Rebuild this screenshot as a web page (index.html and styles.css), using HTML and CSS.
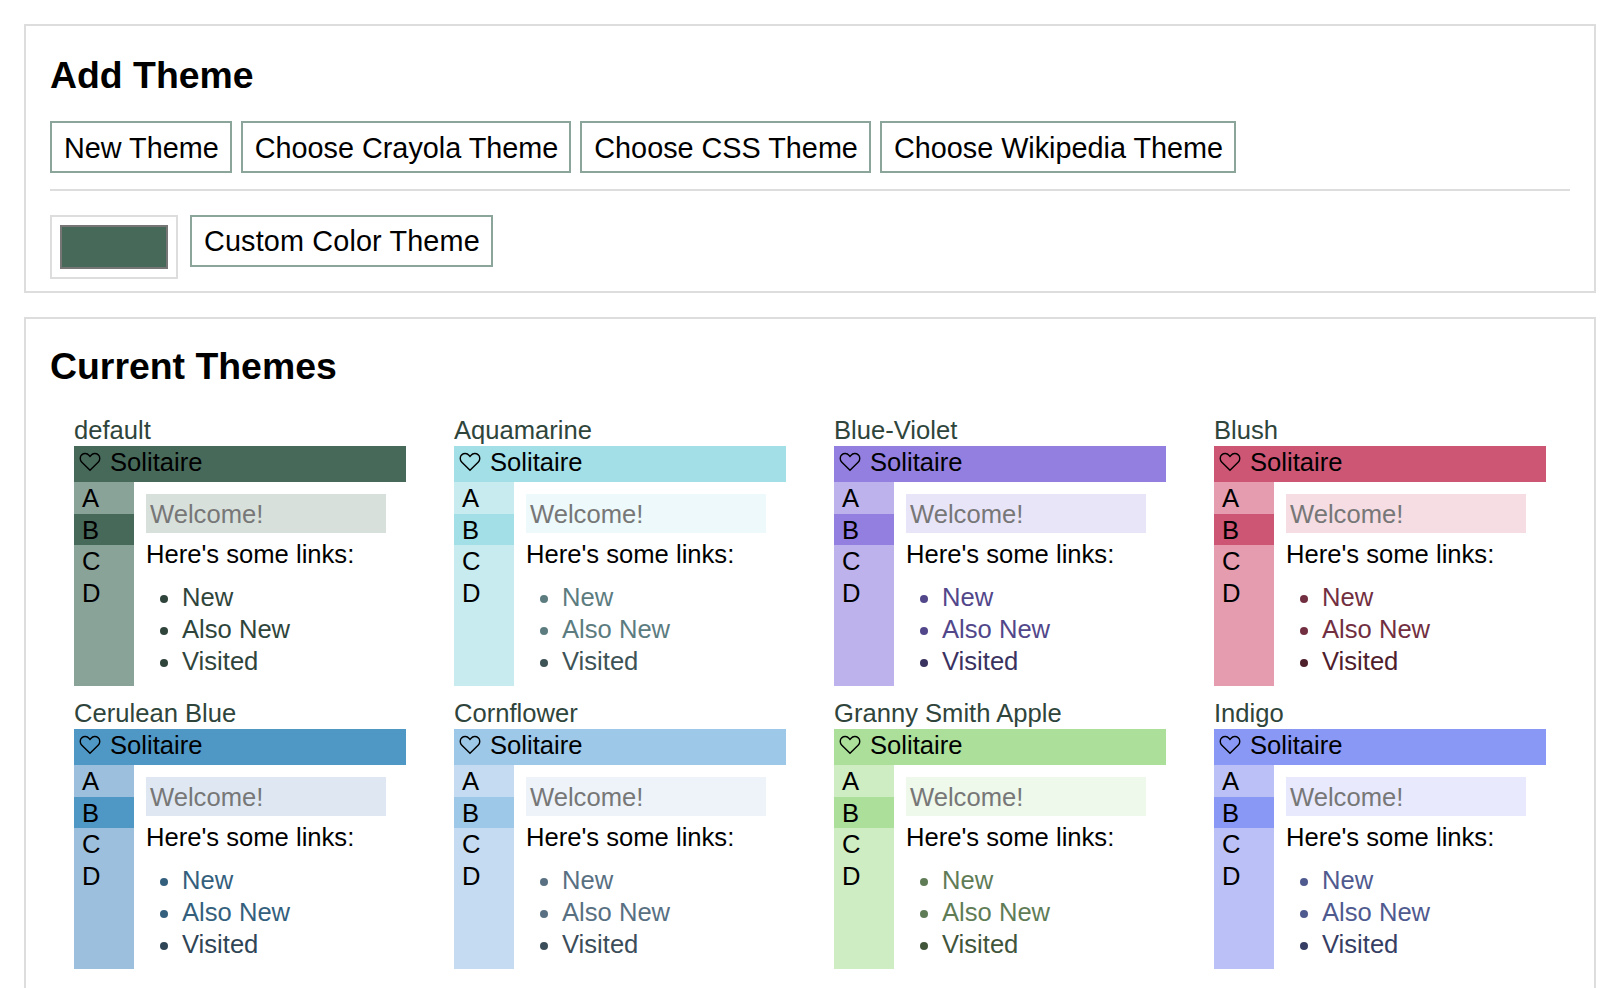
FILE: index.html
```html
<!DOCTYPE HTML><html>
<head>
  <meta name="viewport" content="width=device-width, initial-scale=1">
  <title>Themes</title>
  <link rel="stylesheet" href="styles.css">
</head>
<body>
  <section class="panel add-panel">
    <h2>Add Theme</h2>
    <div class="button-row">
      <button type="button">New Theme</button>
      <button type="button">Choose Crayola Theme</button>
      <button type="button">Choose CSS Theme</button>
      <button type="button">Choose Wikipedia Theme</button>
    </div>
    <hr />
    <div class="button-row custom-row">
      <input class="swatch" type="color" value="#47695a">
      <button type="button" class="custom-button">Custom Color Theme</button>
    </div>
  </section>

  <section class="panel themes-panel">
    <h2>Current Themes</h2>
    <div class="theme-grid">

      <div class="theme theme-default">
        <div class="theme-name">default</div>
        <div class="preview">
          <div class="preview-head"><svg class="heart" viewBox="0 0 20 18"><path d="M10 16.6 2.6 9.2C.6 7.2.7 4.2 2.5 2.5 4.4.8 7.4 1 9 2.8l1 1.1 1-1.1c1.6-1.8 4.6-2 6.5-.3 1.8 1.7 1.9 4.7-.1 6.7z"/></svg>Solitaire</div>
          <div class="preview-body">
            <ul class="side"><li>A</li><li class="active">B</li><li>C</li><li>D</li></ul>
            <div class="main">
              <div class="welcome">Welcome!</div>
              <p>Here's some links:</p>
              <ul class="links"><li>New</li><li>Also New</li><li class="visited">Visited</li></ul>
            </div>
          </div>
        </div>
      </div>

      <div class="theme theme-aquamarine">
        <div class="theme-name">Aquamarine</div>
        <div class="preview">
          <div class="preview-head"><svg class="heart" viewBox="0 0 20 18"><path d="M10 16.6 2.6 9.2C.6 7.2.7 4.2 2.5 2.5 4.4.8 7.4 1 9 2.8l1 1.1 1-1.1c1.6-1.8 4.6-2 6.5-.3 1.8 1.7 1.9 4.7-.1 6.7z"/></svg>Solitaire</div>
          <div class="preview-body">
            <ul class="side"><li>A</li><li class="active">B</li><li>C</li><li>D</li></ul>
            <div class="main">
              <div class="welcome">Welcome!</div>
              <p>Here's some links:</p>
              <ul class="links"><li>New</li><li>Also New</li><li class="visited">Visited</li></ul>
            </div>
          </div>
        </div>
      </div>

      <div class="theme theme-blueviolet">
        <div class="theme-name">Blue-Violet</div>
        <div class="preview">
          <div class="preview-head"><svg class="heart" viewBox="0 0 20 18"><path d="M10 16.6 2.6 9.2C.6 7.2.7 4.2 2.5 2.5 4.4.8 7.4 1 9 2.8l1 1.1 1-1.1c1.6-1.8 4.6-2 6.5-.3 1.8 1.7 1.9 4.7-.1 6.7z"/></svg>Solitaire</div>
          <div class="preview-body">
            <ul class="side"><li>A</li><li class="active">B</li><li>C</li><li>D</li></ul>
            <div class="main">
              <div class="welcome">Welcome!</div>
              <p>Here's some links:</p>
              <ul class="links"><li>New</li><li>Also New</li><li class="visited">Visited</li></ul>
            </div>
          </div>
        </div>
      </div>

      <div class="theme theme-blush">
        <div class="theme-name">Blush</div>
        <div class="preview">
          <div class="preview-head"><svg class="heart" viewBox="0 0 20 18"><path d="M10 16.6 2.6 9.2C.6 7.2.7 4.2 2.5 2.5 4.4.8 7.4 1 9 2.8l1 1.1 1-1.1c1.6-1.8 4.6-2 6.5-.3 1.8 1.7 1.9 4.7-.1 6.7z"/></svg>Solitaire</div>
          <div class="preview-body">
            <ul class="side"><li>A</li><li class="active">B</li><li>C</li><li>D</li></ul>
            <div class="main">
              <div class="welcome">Welcome!</div>
              <p>Here's some links:</p>
              <ul class="links"><li>New</li><li>Also New</li><li class="visited">Visited</li></ul>
            </div>
          </div>
        </div>
      </div>

      <div class="theme theme-cerulean">
        <div class="theme-name">Cerulean Blue</div>
        <div class="preview">
          <div class="preview-head"><svg class="heart" viewBox="0 0 20 18"><path d="M10 16.6 2.6 9.2C.6 7.2.7 4.2 2.5 2.5 4.4.8 7.4 1 9 2.8l1 1.1 1-1.1c1.6-1.8 4.6-2 6.5-.3 1.8 1.7 1.9 4.7-.1 6.7z"/></svg>Solitaire</div>
          <div class="preview-body">
            <ul class="side"><li>A</li><li class="active">B</li><li>C</li><li>D</li></ul>
            <div class="main">
              <div class="welcome">Welcome!</div>
              <p>Here's some links:</p>
              <ul class="links"><li>New</li><li>Also New</li><li class="visited">Visited</li></ul>
            </div>
          </div>
        </div>
      </div>

      <div class="theme theme-cornflower">
        <div class="theme-name">Cornflower</div>
        <div class="preview">
          <div class="preview-head"><svg class="heart" viewBox="0 0 20 18"><path d="M10 16.6 2.6 9.2C.6 7.2.7 4.2 2.5 2.5 4.4.8 7.4 1 9 2.8l1 1.1 1-1.1c1.6-1.8 4.6-2 6.5-.3 1.8 1.7 1.9 4.7-.1 6.7z"/></svg>Solitaire</div>
          <div class="preview-body">
            <ul class="side"><li>A</li><li class="active">B</li><li>C</li><li>D</li></ul>
            <div class="main">
              <div class="welcome">Welcome!</div>
              <p>Here's some links:</p>
              <ul class="links"><li>New</li><li>Also New</li><li class="visited">Visited</li></ul>
            </div>
          </div>
        </div>
      </div>

      <div class="theme theme-granny">
        <div class="theme-name">Granny Smith Apple</div>
        <div class="preview">
          <div class="preview-head"><svg class="heart" viewBox="0 0 20 18"><path d="M10 16.6 2.6 9.2C.6 7.2.7 4.2 2.5 2.5 4.4.8 7.4 1 9 2.8l1 1.1 1-1.1c1.6-1.8 4.6-2 6.5-.3 1.8 1.7 1.9 4.7-.1 6.7z"/></svg>Solitaire</div>
          <div class="preview-body">
            <ul class="side"><li>A</li><li class="active">B</li><li>C</li><li>D</li></ul>
            <div class="main">
              <div class="welcome">Welcome!</div>
              <p>Here's some links:</p>
              <ul class="links"><li>New</li><li>Also New</li><li class="visited">Visited</li></ul>
            </div>
          </div>
        </div>
      </div>

      <div class="theme theme-indigo">
        <div class="theme-name">Indigo</div>
        <div class="preview">
          <div class="preview-head"><svg class="heart" viewBox="0 0 20 18"><path d="M10 16.6 2.6 9.2C.6 7.2.7 4.2 2.5 2.5 4.4.8 7.4 1 9 2.8l1 1.1 1-1.1c1.6-1.8 4.6-2 6.5-.3 1.8 1.7 1.9 4.7-.1 6.7z"/></svg>Solitaire</div>
          <div class="preview-body">
            <ul class="side"><li>A</li><li class="active">B</li><li>C</li><li>D</li></ul>
            <div class="main">
              <div class="welcome">Welcome!</div>
              <p>Here's some links:</p>
              <ul class="links"><li>New</li><li>Also New</li><li class="visited">Visited</li></ul>
            </div>
          </div>
        </div>
      </div>

    </div>
  </section>
</body>
</html>
```

FILE: styles.css
```css
html {font-family: "Liberation Sans", Arial, sans-serif; font-size: 25.6px; line-height: 32px; color: #000;}
html, body {height: 100%; overflow: hidden;}
body {margin: 0; padding: 24px 22px 24px 24px; box-sizing: border-box; background: #fff;}

.panel {border: 2px solid #ddd; padding: 24px; margin-bottom: 24px;}
.add-panel {height: 269px; box-sizing: border-box;}
h2 {font-size: 37.4px; line-height: 46px; margin: 2px 0 23px; font-weight: bold;}
hr {border: 0; border-top: 2px solid #ddd; margin: 16px 0 24px;}

.button-row {display: flex; gap: 9px; align-items: flex-start;}
.custom-row {gap: 12px;}
button {
  font-family: inherit;
  font-size: 28.8px;
  line-height: 36px;
  height: 52px;
  padding: 2px 11px 0 12px;
  background: #fff;
  color: #000;
  border: 2px solid #8ba59b;
  border-radius: 0;
}
.custom-button {letter-spacing: .15px; padding-top: 0;}
.swatch {
  width: 128px;
  height: 64px;
  padding: 8px;
  border: 2px solid #ddd;
  background: #fff;
  box-sizing: border-box;
}
.swatch::-webkit-color-swatch-wrapper {padding: 0;}
.swatch::-webkit-color-swatch {border: 2px solid #767676; border-radius: 0;}

.themes-panel h2 {margin: 0 0 23px;}
.theme-grid {display: grid; grid-template-columns: repeat(4, 332px); column-gap: 48px; row-gap: 0; padding: 0 24px;}
.theme {color: var(--ink); height: 283px;}
.theme-name {height: 34px; line-height: 36px;}

.preview-head {display: flex; align-items: center; box-sizing: border-box; height: 36px; padding: 0 0 4px 5px; background: var(--primary); color: #000;}
.heart {width: 22px; height: 20px; margin-right: 9px; fill: none; stroke: #000; stroke-width: 1.3;}
.preview-body {display: flex; height: 204px;}

.side {list-style: none; margin: 0; padding: 0; width: 60px; background: var(--secondary); color: #000;}
.side li {padding-left: 8px; height: 31.6px;}
.side .active {background: var(--primary);}

.main {margin-left: 12px; width: 240px; padding-top: 12px;}
.welcome {height: 39px; line-height: 41px; background: var(--tint); color: #777; padding-left: 4px;}
.main p {margin: 5px 0 11px; color: #000;}
.links {margin: 0; padding-left: 36px; color: var(--link);}
.links .visited {color: var(--visited);}

.theme-default {--primary: #47695a; --secondary: #8aa398; --tint: #d8e0dc; --link: #2f453b; --visited: #2f453b; --ink: #2f453b;}
.theme-aquamarine {--primary: #a3dfe7; --secondary: #c8ebef; --tint: #edf9fa; --link: #5c7c80; --visited: #3d5356; --ink: #2f453b;}
.theme-blueviolet {--primary: #937fe0; --secondary: #beb2ec; --tint: #e9e5f9; --link: #52478a; --visited: #3a325f; --ink: #2f453b;}
.theme-blush {--primary: #cc5674; --secondary: #e59cae; --tint: #f5dde3; --link: #722f41; --visited: #4e202c; --ink: #2f453b;}
.theme-cerulean {--primary: #4f98c6; --secondary: #9cbfdd; --tint: #dfe8f2; --link: #345f7d; --visited: #2f4556; --ink: #2f453b;}
.theme-cornflower {--primary: #9dc8e8; --secondary: #c4dbf1; --tint: #edf3f9; --link: #587082; --visited: #3c4d5a; --ink: #2f453b;}
.theme-granny {--primary: #abdf9a; --secondary: #ceedc3; --tint: #eef8eb; --link: #5f7c56; --visited: #41553b; --ink: #2f453b;}
.theme-indigo {--primary: #8a98f5; --secondary: #bbc1f7; --tint: #e8e9fc; --link: #4f5a8f; --visited: #363e63; --ink: #2f453b;}
```
